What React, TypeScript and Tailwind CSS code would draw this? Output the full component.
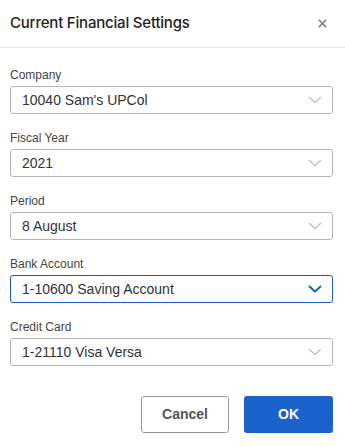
interface FieldProps {
  label: string
  value: string
  focused?: boolean
}

function Chevron({ focused }: { focused?: boolean }) {
  return (
    <svg
      width="14"
      height="8"
      viewBox="0 0 14 8"
      fill="none"
      stroke="currentColor"
      strokeWidth={focused ? 2 : 1.3}
      strokeLinecap="round"
      strokeLinejoin="round"
      className={focused ? 'text-[#1a5fc8]' : 'text-[#bdbdbd]'}
    >
      <path d="M1.5 1.5l5.5 5 5.5-5" />
    </svg>
  )
}

function SelectField({ label, value, focused }: FieldProps) {
  return (
    <div className="flex flex-col">
      <label className="mb-[4px] text-[12px] leading-[14px] text-[#444]">{label}</label>
      <div
        className={
          focused
            ? 'flex h-[28px] items-center justify-between rounded-[3px] border border-[#1a5fc8] pl-[11px] pr-[10px]'
            : 'flex h-[28px] items-center justify-between rounded-[3px] border border-[#b5b5b5] pl-[11px] pr-[10px]'
        }
      >
        <span className="text-[14px] leading-none text-[#333]">{value}</span>
        <Chevron focused={focused} />
      </div>
    </div>
  )
}

export default function App() {
  const fields: FieldProps[] = [
    { label: 'Company', value: "10040 Sam's UPCol" },
    { label: 'Fiscal Year', value: '2021' },
    { label: 'Period', value: '8 August' },
    { label: 'Bank Account', value: '1-10600 Saving Account', focused: true },
    { label: 'Credit Card', value: '1-21110 Visa Versa' },
  ]

  return (
    <div className="h-[447px] w-[345px] bg-white font-['Liberation_Sans',Arial,sans-serif]">
      <header className="flex h-[48px] items-center justify-between border-b border-[#e8e8e8] pl-[10px] pr-[18px]">
        <h1 className="font-['Inter',sans-serif] text-[15px] font-medium tracking-[-0.2px] text-[#222]">
          Current Financial Settings
        </h1>
        <button aria-label="Close" className="text-[#777]">
          <svg width="9" height="9" viewBox="0 0 9 9" fill="none" stroke="currentColor" strokeWidth="1.5">
            <path d="M0.8 0.8l7.4 7.4M8.2 0.8l-7.4 7.4" />
          </svg>
        </button>
      </header>

      <div className="flex flex-col gap-[17px] pl-[10px] pr-[12px] pt-[20px]">
        {fields.map((f) => (
          <SelectField key={f.label} {...f} />
        ))}
      </div>

      <div className="mt-[30px] flex justify-end gap-[15px] pr-[12px]">
        <button className="h-[37px] w-[88px] rounded-[3px] border border-[#9a9a9a] bg-white text-[14px] font-bold text-[#555]">
          Cancel
        </button>
        <button className="h-[37px] w-[89px] rounded-[3px] bg-[#1a62cc] text-[14px] font-bold text-white">
          OK
        </button>
      </div>
    </div>
  )
}
